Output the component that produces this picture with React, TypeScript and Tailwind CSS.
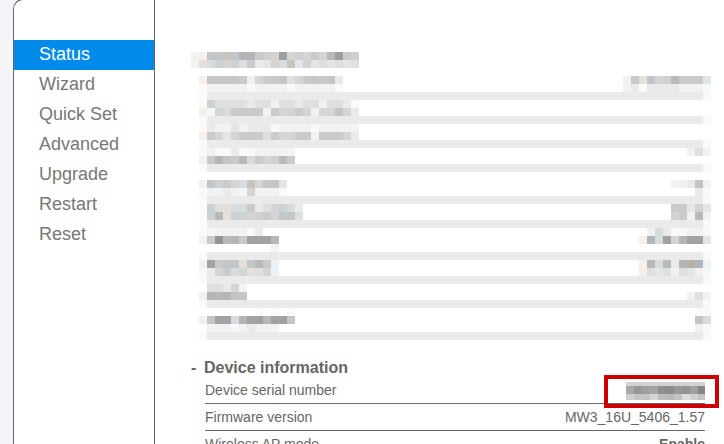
interface MaskedGroup {
  left: string[];
  right: string[];
}

const CELL = 8;

// one letter per cell: lower case is neutral, upper case is cool, digits are warm
const SHADES: Record<string, string> = {
  a: '#f9f9f9', b: '#f2f2f2', c: '#eaeaea', d: '#dfdfdf', e: '#d5d5d5', f: '#cacaca', g: '#b9b9b9', h: '#a3a2a2', i: '#949294',
  A: '#f5f8fb', B: '#edf2f6', C: '#e2e6e9', D: '#d7dcdf', E: '#ccd1d4', F: '#c2c6c8', G: '#b2b5b9', H: '#9d9fa2',
  '1': '#fdf9f5', '2': '#f7efe9', '3': '#e5e1da', '4': '#d6d2ce', '5': '#c9c3be', '6': '#b8afa8',
};

const TITLE = ['b2FF5FGGfE4HeEefegHfEc', 'b3DE4EdfcC4D5C4CdCdCd'].map((r) => r.slice(0, 21));

const GROUPS: MaskedGroup[] = [
  { left: [' 2FFFFfBeffF3efFfFc', ' 1bbbbbabbbbabbbbba'], right: ['bf3FeEgfffC', 'bc1ccccbbbA'] },
  { left: [' 1Eddddcddbddcddbddca', ' 2AeDffffbfe4febeeFec'], right: ['', ''] },
  { left: [' 1cbbCbcccabbbbabbbbb', ' 2feCefffdfeeffbfffec'], right: ['', ''] },
  { left: [' abaacaabbbbb', ' 2fGFfgDfeEgf'], right: ['bdb', ''] },
  { left: ['', ' 2FEfeD5eFFC', ' aBbcbAebbba'], right: ['', 'bbc5B', 'ca'] },
  { left: [' 1Ed3DDfcdeEDc', ' 1Eg3EEeEfeFFd'], right: ['ffC4C', '4fbgb'] },
  { left: [' 1Abbbbac', ' bfigGfhhhg', '          b'], right: ['bDcaabba', '2GDheGhhC', ''] },
  { left: [' bhfFF3FgfB', ' acefDe3deB'], right: ['2gDgcG6GB', '2dCdbdCbA'] },
  { left: ['  ddceb', ' 2GgG5F'], right: ['', 'bdb'] },
  { left: ['        a a a', ' 2FhhDGhhghhF', '  bbbAbcbbb'], right: ['aa', '5D', 'ba'] },
];

const MENU = ['Status', 'Wizard', 'Quick Set', 'Advanced', 'Upgrade', 'Restart', 'Reset'];

const SERIAL = ['#aba7a4', '#979797', '#a0a0a0', '#9ea5a6', '#8f8f8f', '#8c8c8c', '#999999', '#929292', '#a0a0a0', '#868686'];
const SERIAL_LOW = ['#cfcfcf', '#c4c6c7', '#c4c4c4', '#d3d6d7', '#bdbdbd', '#b9b9b9', '#c2c2c2', '#dcdfe0', '#d0d0d0', '#c4c4c4'];

function Mosaic({ rows, alignRight }: { rows: string[]; alignRight?: boolean }) {
  const cols = Math.max(1, ...rows.map((r) => r.length));
  return (
    <svg width={cols * CELL} height={rows.length * CELL} shapeRendering="crispEdges" aria-hidden="true" className="block">
      {rows.map((row, y) => {
        const shift = alignRight ? cols - row.length : 0;
        return row.split('').map((c, x) =>
          c === ' ' ? null : (
            <rect key={`${x}-${y}`} x={(x + shift) * CELL} y={y * CELL} width={CELL} height={CELL} fill={SHADES[c]} />
          )
        );
      })}
    </svg>
  );
}

function MaskedSection() {
  return (
    <section>
      <Mosaic rows={TITLE} />
      <div className="mt-2">
        {GROUPS.map((g, i) => (
          <div key={i}>
            <div className="flex justify-between">
              <Mosaic rows={g.left} />
              <Mosaic rows={g.right} alignRight />
            </div>
            <div className="flex h-2 pl-2">
              <span className="w-2 bg-[#fafafa]" />
              <span className="flex-1 bg-[#eaeaea]" />
              <span className="w-2 bg-[#f9f9f9]" />
            </div>
          </div>
        ))}
      </div>
    </section>
  );
}

function SerialNumber() {
  return (
    <span className="relative inline-block align-middle">
      <svg width="79" height="18" shapeRendering="crispEdges" aria-hidden="true" className="block">
        <rect width="79" height="4" fill="#d2d2d2" />
        {SERIAL.map((c, i) => (
          <rect key={`top-${i}`} x={i * CELL} y="4" width={CELL} height="8" fill={c} />
        ))}
        {SERIAL_LOW.map((c, i) => (
          <rect key={`low-${i}`} x={i * CELL} y="12" width={CELL} height="6" fill={c} />
        ))}
      </svg>
      <span className="absolute -top-[7px] -right-[14px] -bottom-2 -left-[22px] border-4 border-[#cc0000]" />
    </span>
  );
}

function DeviceInfo() {
  return (
    <section className="mt-[19px] text-[#666]">
      <h2 className="flex text-base leading-[18px] font-bold">
        <span className="w-[13px]">-</span>
        Device information
      </h2>
      <div className="pr-[6px] pl-[14px]">
        <table className="w-full text-sm leading-[26px]">
          <tbody>
            <tr className="border-b border-[#666]">
              <th scope="row" className="p-0 text-left font-normal">Device serial number</th>
              <td className="p-0 text-right"><SerialNumber /></td>
            </tr>
            <tr className="border-b border-[#666]">
              <th scope="row" className="p-0 text-left font-normal">Firmware version</th>
              <td className="p-0 text-right">MW3_16U_5406_1.57</td>
            </tr>
            <tr className="border-b border-[#666]">
              <th scope="row" className="p-0 text-left font-normal">Wireless AP mode</th>
              <td className="p-0 text-right font-bold">Enable</td>
            </tr>
          </tbody>
        </table>
      </div>
    </section>
  );
}

export default function App() {
  return (
    <div className="h-screen overflow-hidden bg-[#f3f5f8] pl-[13px] font-['Liberation_Sans',Arial,sans-serif]">
      <div className="-mt-px flex min-h-[101vh] rounded-tl-[10px] border-t border-l border-[#666] bg-white">
        <nav className="w-[141px] shrink-0 border-r border-[#666] pt-10">
          <ul>
            {MENU.map((item, i) => (
              <li key={item}>
                <a
                  href="#"
                  aria-current={i === 0 ? 'page' : undefined}
                  className={
                    i === 0
                      ? 'block bg-[#008bea] pb-0.5 pl-[25px] text-lg leading-7 text-white'
                      : 'block pb-0.5 pl-[25px] text-lg leading-7 text-[#777]'
                  }
                >
                  {item}
                </a>
              </li>
            ))}
          </ul>
        </nav>
        <main className="min-w-0 flex-1 pt-[52px] pr-[13px] pl-9">
          <MaskedSection />
          <DeviceInfo />
        </main>
      </div>
    </div>
  );
}
